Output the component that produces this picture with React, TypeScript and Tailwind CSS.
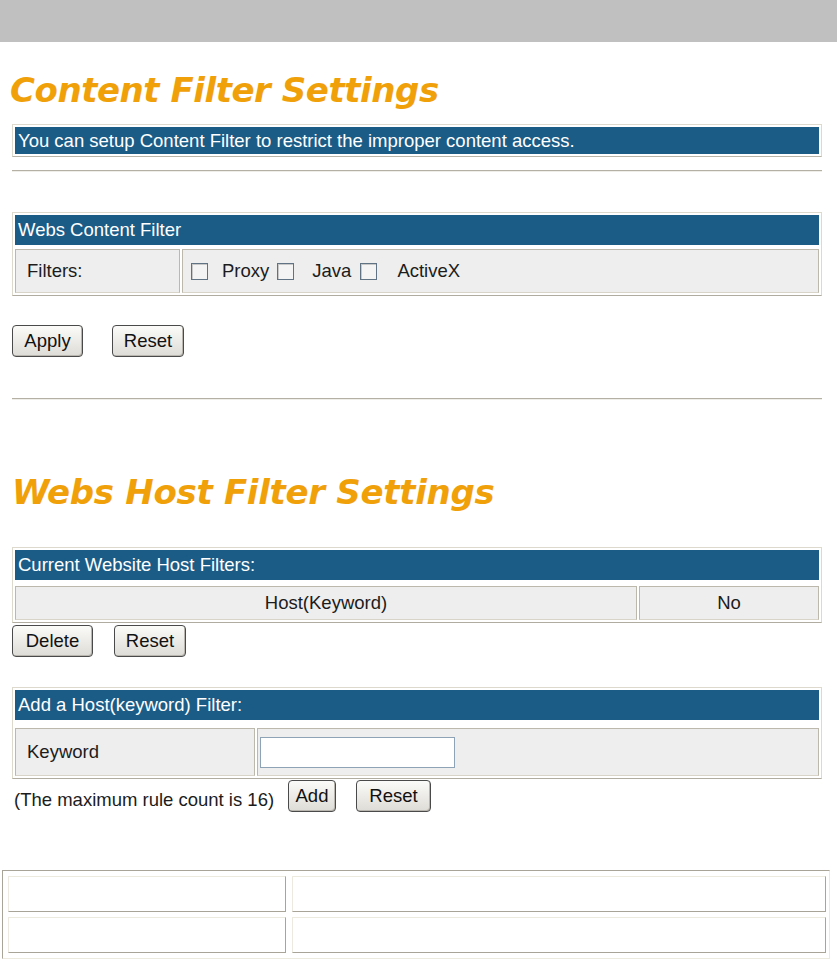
import React from "react";

const blue = "bg-[#1b5c87]";

function Btn({ label, w, className = "" }: { label: string; w: string; className?: string }) {
  return (
    <button
      className={`${w} h-[32px] rounded-[4px] border border-[#4a4a4a] bg-gradient-to-b from-[#fbfbf9] to-[#dedcd6] text-[18.5px] leading-[30px] text-[#111] shadow-[inset_-1px_-1px_0_#b8b6ae] ${className}`}
    >
      {label}
    </button>
  );
}

function Box() {
  return <span className="inline-block w-[17px] h-[17px] border border-[#5f7384] bg-[#f4f4f4] shadow-[inset_1px_1px_0_#c8c8c8]" />;
}

function Hr() {
  return <div className="ml-[12px] w-[810px] h-[2px] border-t border-[#b4b0a4] border-b border-b-[#f0eee8]" />;
}

export default function App() {
  return (
    <div className="w-[837px] min-h-[960px] bg-white font-['Liberation_Sans',Arial,sans-serif] text-[18.5px] text-[#1c1c1c] overflow-hidden">
      <div className="h-[42px] bg-[#c0c0c0]" />

      <h1 className="mt-[29px] ml-[10px] h-[38px] leading-[38px] text-[34px] font-bold italic text-[#f0a10a] font-['DejaVu_Sans',Verdana,sans-serif] tracking-[-0.45px]">
        Content Filter Settings
      </h1>

      <div className="mt-[15px] ml-[12px] w-[810px] border border-[#ddd9cc] border-b-[#b8b4a8] p-[2px]">
        <div className={`h-[27px] ${blue} text-white leading-[27px] pl-[3px] whitespace-nowrap`}>
          You can setup Content Filter to restrict the improper content access.
        </div>
      </div>

      <div className="mt-[13px]">
        <Hr />
      </div>

      {/* Webs Content Filter */}
      <div className="mt-[40px] ml-[12px] w-[810px] border border-[#ddd9cc] border-b-[#b0ac9f] p-[2px] flex flex-col gap-[4px]">
        <div className={`h-[30px] ${blue} text-white leading-[30px] pl-[3px]`}>Webs Content Filter</div>
        <div className="flex gap-[2px] h-[44px]">
          <div className="w-[165px] bg-[#eeeeee] border border-[#bcb8ac] border-b-[#d8d4c8] flex items-center pl-[11px]">
            Filters:
          </div>
          <div className="flex-1 bg-[#eeeeee] border border-[#bcb8ac] border-b-[#d8d4c8] flex items-center pl-[8px]">
            <Box />
            <span className="ml-[14px]">Proxy</span>
            <span className="ml-[8px] flex"><Box /></span>
            <span className="ml-[18px]">Java</span>
            <span className="ml-[9px] flex"><Box /></span>
            <span className="ml-[20px]">ActiveX</span>
          </div>
        </div>
      </div>

      <div className="mt-[29px] ml-[12px] flex gap-[29px]">
        <Btn label="Apply" w="w-[71px]" />
        <Btn label="Reset" w="w-[72px]" />
      </div>

      <div className="mt-[41px]">
        <Hr />
      </div>

      <h1 className="mt-[73px] ml-[12px] h-[38px] leading-[38px] text-[34px] font-bold italic text-[#f0a10a] font-['DejaVu_Sans',Verdana,sans-serif] tracking-[-0.3px]">
        Webs Host Filter Settings
      </h1>

      {/* Current Website Host Filters */}
      <div className="mt-[36px] ml-[12px] w-[810px] border border-[#ddd9cc] border-b-[#b0ac9f] p-[2px] flex flex-col gap-[6px]">
        <div className={`h-[30px] ${blue} text-white leading-[30px] pl-[3px]`}>Current Website Host Filters:</div>
        <div className="flex gap-[2px] h-[34px]">
          <div className="w-[622px] bg-[#eeeeee] border border-[#bcb8ac] border-b-[#d8d4c8] flex items-center justify-center">
            Host(Keyword)
          </div>
          <div className="flex-1 bg-[#eeeeee] border border-[#bcb8ac] border-b-[#d8d4c8] flex items-center justify-center">
            No
          </div>
        </div>
      </div>

      <div className="mt-[2px] ml-[12px] flex gap-[21px]">
        <Btn label="Delete" w="w-[81px]" />
        <Btn label="Reset" w="w-[72px]" />
      </div>

      {/* Add a Host(keyword) Filter */}
      <div className="mt-[30px] ml-[12px] w-[810px] border border-[#ddd9cc] border-b-[#b0ac9f] p-[2px] flex flex-col gap-[8px]">
        <div className={`h-[30px] ${blue} text-white leading-[30px] pl-[3px]`}>Add a Host(keyword) Filter:</div>
        <div className="flex gap-[2px] h-[48px]">
          <div className="w-[240px] bg-[#eeeeee] border border-[#bcb8ac] border-b-[#d8d4c8] flex items-center pl-[11px]">
            Keyword
          </div>
          <div className="flex-1 bg-[#eeeeee] border border-[#bcb8ac] border-b-[#d8d4c8] flex items-center pl-[2px]">
            <input
              type="text"
              className="w-[195px] h-[31px] bg-white border border-[#8fa3b6] outline-none"
            />
          </div>
        </div>
      </div>

      <div className="mt-[1px] ml-[14px] flex items-end h-[32px]">
        <span className="w-[274px] leading-[22px] mb-[1px] whitespace-nowrap">(The maximum rule count is 16)</span>
        <Btn label="Add" w="w-[48px]" className="!leading-[24px]" />
        <Btn label="Reset" w="w-[75px]" className="ml-[20px]" />
      </div>

      {/* bottom table */}
      <div className="mt-[58px] ml-[2px] w-[828px] border border-[#a8a498] border-b-[#ece9df] border-r-[#ece9df] pt-[5px] pb-[5px] pl-[5px] pr-[2px] flex flex-col gap-[5px]">
        <div className="flex gap-[6px] h-[36px]">
          <div className="w-[278px] border border-[#ece9df] border-b-[#a8a498] border-r-[#a8a498]" />
          <div className="w-[534px] border border-[#ece9df] border-b-[#a8a498] border-r-[#a8a498]" />
        </div>
        <div className="flex gap-[6px] h-[36px]">
          <div className="w-[278px] border border-[#ece9df] border-b-[#a8a498] border-r-[#a8a498]" />
          <div className="w-[534px] border border-[#ece9df] border-b-[#a8a498] border-r-[#a8a498]" />
        </div>
      </div>
    </div>
  );
}
